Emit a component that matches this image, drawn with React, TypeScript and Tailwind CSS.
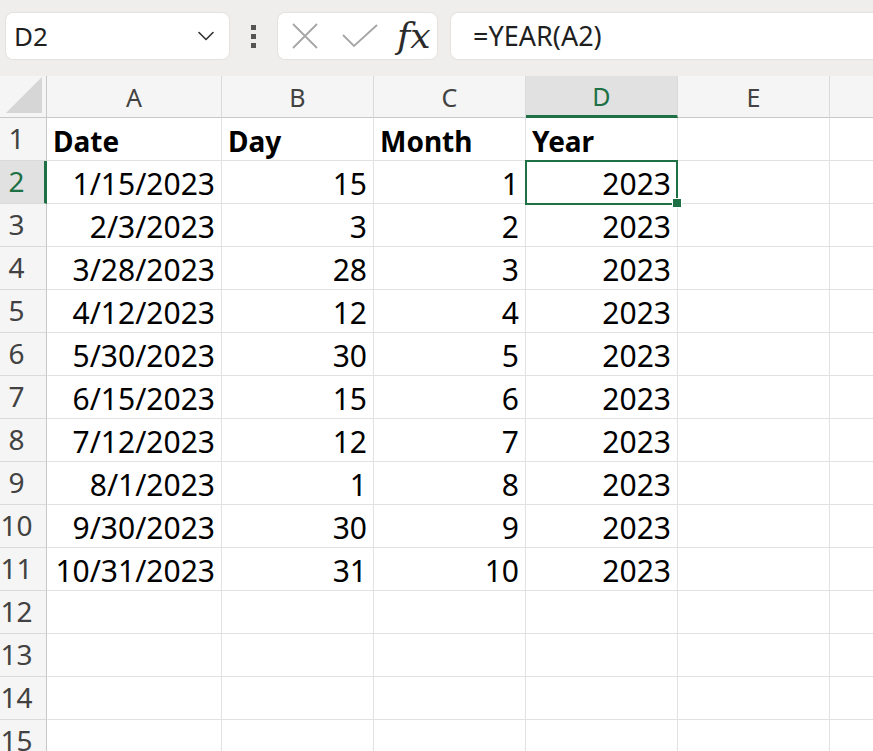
import { ChevronDown } from "lucide-react";

const cols = [
  { key: "A", width: 175 },
  { key: "B", width: 152 },
  { key: "C", width: 152 },
  { key: "D", width: 152 },
  { key: "E", width: 152 },
];

const data: [string, string, string, string][] = [
  ["1/15/2023", "15", "1", "2023"],
  ["2/3/2023", "3", "2", "2023"],
  ["3/28/2023", "28", "3", "2023"],
  ["4/12/2023", "12", "4", "2023"],
  ["5/30/2023", "30", "5", "2023"],
  ["6/15/2023", "15", "6", "2023"],
  ["7/12/2023", "12", "7", "2023"],
  ["8/1/2023", "1", "8", "2023"],
  ["9/30/2023", "30", "9", "2023"],
  ["10/31/2023", "31", "10", "2023"],
];

const Toolbar = () => {
  return (
    <div className="flex h-[76px] items-start bg-[#f0eeec] pt-[12px]">
      <div className="ml-[5px] flex h-[48px] w-[225px] items-center justify-between rounded-[8px] border border-[#e4e2e0] bg-white pl-[8px] pr-[9px]">
        <span className="text-[26px] text-[#1f1f1f]">D2</span>
        <ChevronDown size={28} strokeWidth={1.4} className="text-[#333]" />
      </div>
      <div className="flex h-[48px] w-[47px] flex-col items-center justify-center gap-[4px]">
        <div className="h-[5px] w-[5px] bg-[#555]" />
        <div className="h-[5px] w-[5px] bg-[#555]" />
        <div className="h-[5px] w-[5px] bg-[#555]" />
      </div>
      <div className="flex h-[48px] w-[161px] items-center rounded-[8px] border border-[#e4e2e0] bg-white pl-[12px]">
        <svg width="28" height="28" viewBox="0 0 28 28" className="ml-[1px]">
          <path d="M2 2 L26 26 M26 2 L2 26" stroke="#a6a6a6" strokeWidth="1.8" />
        </svg>
        <svg width="38" height="26" viewBox="0 0 38 26" className="ml-[22px]">
          <path d="M2 12 L13 23 L36 2" stroke="#a6a6a6" strokeWidth="1.8" fill="none" />
        </svg>
        <span
          className="ml-[18px] text-[36px] italic leading-none text-[#2b2b2b]"
          style={{ fontFamily: '"DejaVu Serif", "Liberation Serif", serif' }}
        >
          fx
        </span>
      </div>
      <div className="ml-[12px] flex h-[48px] flex-1 items-center rounded-l-[8px] border border-r-0 border-[#e4e2e0] bg-white pl-[22px]">
        <span className="text-[27px] text-[#1f1f1f]">=YEAR(A2)</span>
      </div>
    </div>
  );
};

const HeaderRow = () => {
  return (
    <div className="flex h-[42px] bg-[#f5f5f5]">
      <div className="relative w-[47px] shrink-0 border-b border-r border-[#c8c8c8]">
        <div className="absolute bottom-[4px] right-[4px] h-0 w-0 border-b-[36px] border-l-[36px] border-b-[#d6d6d6] border-l-transparent" />
      </div>
      {cols.map((c) => {
        const active = c.key === "D";
        return (
          <div
            key={c.key}
            style={{ width: c.width }}
            className={
              active
                ? "flex shrink-0 items-center justify-center border-b-[3px] border-r border-b-[#1e7145] border-r-[#dadada] bg-[#e1e1e1] pt-[2px] text-[25px] text-[#1e7145]"
                : "flex shrink-0 items-center justify-center border-b border-r border-b-[#c8c8c8] border-r-[#dadada] pt-[2px] text-[25px] text-[#424242]"
            }
          >
            {c.key}
          </div>
        );
      })}
      <div className="flex-1 border-b border-[#c8c8c8]" />
    </div>
  );
};

const RowHeader = ({ n }: { n: number }) => {
  const active = n === 2;
  return (
    <div
      className={
        active
          ? "flex w-[47px] shrink-0 items-end justify-center border-b border-r-[3px] border-b-[#dadada] border-r-[#1e7145] bg-[#e1e1e1] pb-[1px] pr-[11px] text-[28px] text-[#1e7145]"
          : "flex w-[47px] shrink-0 items-end justify-center border-b border-r border-b-[#dadada] border-r-[#c8c8c8] bg-[#f5f5f5] pb-[1px] pr-[13px] text-[28px] text-[#424242]"
      }
    >
      {n}
    </div>
  );
};

const Cell = ({
  width,
  children,
  bold,
  selected,
}: {
  width: number;
  children?: React.ReactNode;
  bold?: boolean;
  selected?: boolean;
}) => {
  return (
    <div
      style={{ width }}
      className={
        "relative flex shrink-0 items-end border-b border-r border-[#e1e1e1] px-[6px] pb-[2px] leading-[34px] text-black " +
        (bold ? "justify-start text-[28px] font-bold" : "justify-end text-[30px]")
      }
    >
      {children}
      {selected && (
        <>
          <div className="absolute -left-[1px] -top-[1px] z-10 h-[45px] w-[153px] border-2 border-[#1e7145]" />
          <div className="absolute -bottom-[5px] -right-[5px] z-20 h-[10px] w-[10px] border border-white bg-[#1e7145]" />
        </>
      )}
    </div>
  );
};

const App = () => {
  const rows = Array.from({ length: 15 }, (_, i) => i + 1);
  return (
    <div
      className="h-[751px] w-[873px] overflow-hidden bg-white"
      style={{ fontFamily: '"Noto Sans", sans-serif' }}
    >
      <Toolbar />
      <HeaderRow />
      {rows.map((n) => {
        let values: string[] = ["", "", "", "", ""];
        let bold = false;
        if (n === 1) {
          values = ["Date", "Day", "Month", "Year", ""];
          bold = true;
        } else if (n <= 11) {
          values = [...data[n - 2], ""];
        }
        return (
          <div key={n} className="flex h-[43px]">
            <RowHeader n={n} />
            {cols.map((c, i) => (
              <Cell
                key={c.key}
                width={c.width}
                bold={bold}
                selected={n === 2 && c.key === "D"}
              >
                {values[i]}
              </Cell>
            ))}
            <div className="flex-1 border-b border-[#e1e1e1]" />
          </div>
        );
      })}
    </div>
  );
};

export default App;
